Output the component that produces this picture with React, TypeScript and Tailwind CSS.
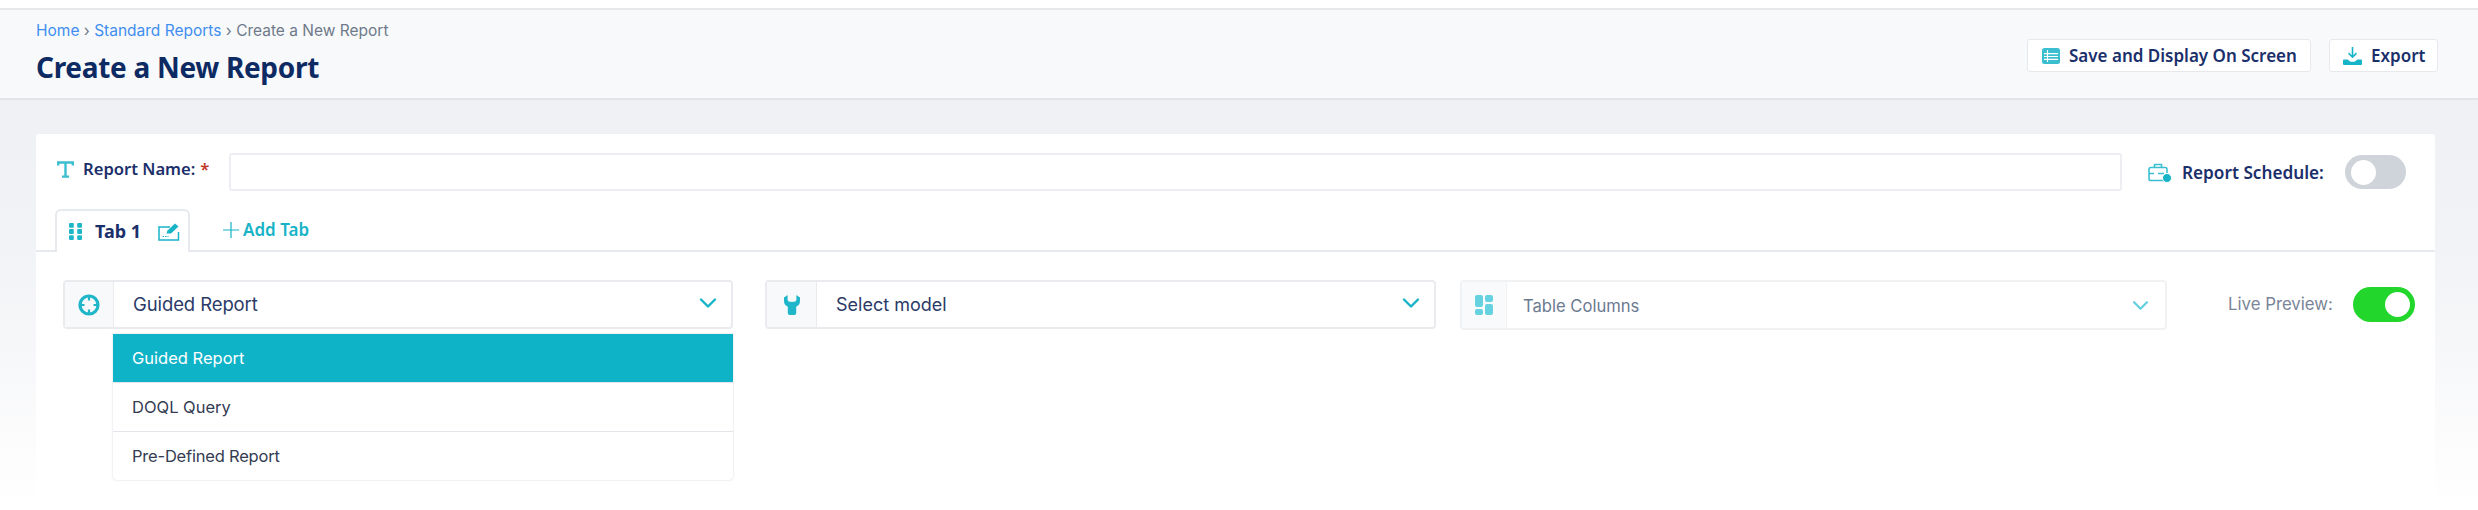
import React from "react";

const teal = "#17b3c7";

function Chevron({ className }: { className: string }) {
  return (
    <svg viewBox="0 0 18 12" className={className} fill="none" stroke="currentColor" strokeWidth="2.4" strokeLinecap="round" strokeLinejoin="round">
      <path d="M2 2.5 9 9.5 16 2.5" />
    </svg>
  );
}

function Toggle({ on }: { on: boolean }) {
  return (
    <div className={on ? "flex h-[35px] w-[62px] shrink-0 items-center justify-end rounded-full bg-[#22d62c] px-[5px]" : "flex h-[34px] w-[61px] shrink-0 items-center justify-start rounded-full bg-[#cfd3da] px-[6px]"}>
      <div className="h-[25px] w-[25px] rounded-full bg-white" />
    </div>
  );
}

export default function App() {
  return (
    <div className="relative flex h-[510px] w-full flex-col overflow-hidden bg-gradient-to-b from-[#eeeff3] via-[#f2f3f6] to-white font-['Inter',sans-serif]">
      <div className="h-2 shrink-0 bg-white" />
      <header className="flex h-[92px] shrink-0 items-start justify-between border-y-2 border-t-[#e6e8ec] border-b-[#e2e4e9] bg-[#f8f9fb] pl-9 pr-10">
        <div className="flex flex-col">
          <div className="mt-[11px] text-[15.5px] leading-5 text-[#6f7a8a]">
            <span className="text-[#3f8ef0]">Home</span> › <span className="text-[#3f8ef0]">Standard Reports</span> › Create a New Report
          </div>
          <h1 className="mt-[8px] font-['Noto_Sans',sans-serif] text-[28px] font-bold leading-9 tracking-[-0.3px] text-[#0d2a62]">Create a New Report</h1>
        </div>
        <div className="mt-[29px] flex gap-[18px] font-['Noto_Sans',sans-serif] text-[17px] font-semibold text-[#1b2f6b]">
          <button className="flex h-[33px] w-[284px] items-center gap-[9px] rounded-[3px] border border-[#e6e8ec] bg-white pl-[14px]">
            <svg viewBox="0 0 18 16" className="h-[16px] w-[18px]">
              <rect width="18" height="16" rx="2.5" fill="#3bbfd0" />
              <path d="M5.5 2v12M2 5.600h14M2 8.500h14M2 11.400h14" stroke="#fff" strokeWidth="1.100" />
            </svg>
            Save and Display On Screen
          </button>
          <button className="flex h-[33px] w-[109px] items-center gap-[9px] rounded-[3px] border border-[#e6e8ec] bg-white pl-[13px]">
            <svg viewBox="0 0 19 18" className="h-[18px] w-[19px]" fill={teal}>
              <path d="M8.7 0h1.6v8.2l2.6-2.6 1.1 1.1-4.5 4.5-4.5-4.5 1.1-1.1 2.6 2.6z" />
              <path d="M0 13.500q0-1 1-1h3.500l3 2.200h4l3-2.200H18q1 0 1 1V17q0 1-1 1H1q-1 0-1-1z" />
            </svg>
            Export
          </button>
        </div>
      </header>
      <main className="mt-[34px] ml-9 mr-[43px] flex min-h-0 flex-1 flex-col rounded-t-[3px] bg-white">
        <div className="mt-[19px] flex items-center pl-[21px] pr-[29px] font-['Noto_Sans',sans-serif] font-semibold text-[#1b2f6b]">
          <svg viewBox="0 0 17 17" className="mb-[6px] h-[17px] w-[17px]" fill="none" stroke="#3bbfd0" strokeWidth="2.4">
            <path d="M1.200 4.500V1.500h14.600v3M8.500 1.500v14M5 15.600h7" />
          </svg>
          <div className="mb-[6px] ml-[9px] w-[146px] text-[16.6px] leading-6">
            Report Name:<span className="ml-[5px] text-[#c0392b]">*</span>
          </div>
          <input className="h-[38px] flex-1 rounded-[3px] border-2 border-[#eceef1] bg-white" />
          <svg viewBox="0 0 24 20" className="ml-[26px] mt-[1px] h-[20px] w-[24px]" fill="none" stroke="#3bbfd0" strokeWidth="1.6">
            <rect x="1" y="4.500" width="18" height="13" rx="1.800" />
            <path d="M6.500 4.500V1.500h7v3M1 10.500h5M10 10.500h6" />
            <circle cx="19" cy="15" r="4.500" fill={teal} stroke="#fff" strokeWidth="1" />
          </svg>
          <span className="ml-[10px] mt-[2px] w-[163px] text-[17.2px]">Report Schedule:</span>
          <Toggle on={false} />
        </div>
        <div className="mt-[18px] flex h-[43px] shrink-0 items-end border-b-2 border-[#e6e9ed] pl-[19px] font-['Noto_Sans',sans-serif] font-semibold">
          <div className="relative -mb-[2px] flex h-[43px] w-[135px] items-center rounded-t-[6px] border-2 border-b-0 border-[#e6e9ed] bg-white pl-3">
            <svg viewBox="0 0 13 17" className="h-[17px] w-[13px]" fill="#1fb6c9">
              <rect width="4.800" height="4.800" rx="1" /><rect x="8.200" width="4.800" height="4.800" rx="1" />
              <rect y="6.100" width="4.800" height="4.800" rx="1" /><rect x="8.200" y="6.100" width="4.800" height="4.800" rx="1" />
              <rect y="12.200" width="4.800" height="4.800" rx="1" /><rect x="8.200" y="12.200" width="4.800" height="4.800" rx="1" />
            </svg>
            <span className="ml-[13px] text-[18px] font-bold text-[#1b2f6b]">Tab 1</span>
            <svg viewBox="0 0 22 18" className="ml-[17px] h-[18px] w-[22px]" fill="none" stroke={teal} strokeWidth="1.500">
              <path d="M12 4H1v13h19.500V9" />
              <path d="M8.500 10.500l1-3 7.500-7 3.500 3-7.500 7z" fill={teal} stroke="none" />
              <path d="M4.500 13.500h6" strokeWidth="1" strokeDasharray="1.500 1" />
            </svg>
          </div>
          <div className="ml-[33px] flex h-[41px] items-center text-[17px] text-[#17b3c7]">
            <svg viewBox="0 0 16 16" className="h-4 w-4" fill="none" stroke={teal} strokeWidth="1.200"><path d="M8 0v16M0 8h16" /></svg>
            <span className="ml-1">Add Tab</span>
          </div>
        </div>
        <div className="relative mt-[28px] flex items-start pl-[27px] pr-[21px]">
          <div className="relative flex h-[49px] w-[670px] shrink-0 rounded-[4px] border-2 border-[#e9ebee] bg-white">
            <div className="flex w-[49px] items-center justify-center border-r border-[#e9ebee] bg-[#f8f9fb]">
              <svg viewBox="0 0 22 22" className="h-[22px] w-[22px]" fill="none" stroke="#1fb6c9" strokeWidth="3.200">
                <circle cx="11" cy="11" r="9" />
                <path d="M11 2v4.500M11 15.500v4.500M2 11h4.500M15.500 11h4.500" strokeWidth="2.200" />
              </svg>
            </div>
            <span className="ml-[19px] self-center text-[18.5px] tracking-[-0.1px] text-[#2b3a67]">Guided Report</span>
            <Chevron className="absolute right-[14px] top-[15px] h-3 w-[18px] text-[#17b3c7]" />
            <ul className="absolute left-[48px] top-[52px] w-[620px] overflow-hidden rounded-b-[4px] bg-white text-[16.5px] text-[#343c52] shadow-[0_0_2px_#c9ccd3]">
              <li className="flex h-[48px] items-center bg-[#0fb3c8] pl-[19px] text-white">Guided Report</li>
              <li className="flex h-[49px] items-center border-t border-[#e3e5ea] pl-[19px]">DOQL Query</li>
              <li className="flex h-[49px] items-center border-t border-[#e3e5ea] pl-[19px] tracking-[-0.2px]">Pre-Defined Report</li>
            </ul>
          </div>
          <div className="relative ml-[32px] flex h-[49px] w-[671px] shrink-0 rounded-[4px] border-2 border-[#e9ebee] bg-white">
            <div className="flex w-[50px] items-center justify-center border-r border-[#e9ebee] bg-[#f8f9fb]">
              <svg viewBox="0 0 16 20" className="h-[20px] w-[16px]" fill="#1fb6c9">
                <path d="M0 2.500 3.600 0v4.500Q3.600 7 8 7t4.400-2.500V0L16 2.500V6q0 4.200-3.800 5.600V18q0 2-2 2H5.800q-2 0-2-2v-6.400Q0 10.200 0 6z" />
              </svg>
            </div>
            <span className="ml-[19px] self-center text-[18px] text-[#2b3a67]">Select model</span>
            <Chevron className="absolute right-[14px] top-[15px] h-3 w-[18px] text-[#17b3c7]" />
          </div>
          <div className="relative ml-[24px] flex h-[50px] w-[707px] shrink-0 rounded-[4px] border-2 border-[#f1f2f4] bg-white">
            <div className="flex w-[45px] items-center justify-center border-r border-[#f1f2f4] bg-[#f9fafb]">
              <svg viewBox="0 0 18 20" className="h-[20px] w-[18px]" fill="#66d1df">
                <rect width="8" height="12" rx="2" /><rect x="10" width="8" height="7" rx="2" />
                <rect y="14" width="8" height="6" rx="2" /><rect x="10" y="9" width="8" height="11" rx="2" />
              </svg>
            </div>
            <span className="ml-[16px] mt-[2px] self-center text-[16.6px] text-[#6b7a90]">Table Columns</span>
            <Chevron className="absolute right-[16px] top-[18px] h-[11px] w-[17px] text-[#5fd0e0]" />
          </div>
          <span className="ml-[61px] mt-[12px] shrink-0 whitespace-nowrap text-[16.8px] text-[#7a8598]">Live Preview:</span>
          <div className="ml-[20px] mt-[7px]"><Toggle on /></div>
        </div>
      </main>
    </div>
  );
}
